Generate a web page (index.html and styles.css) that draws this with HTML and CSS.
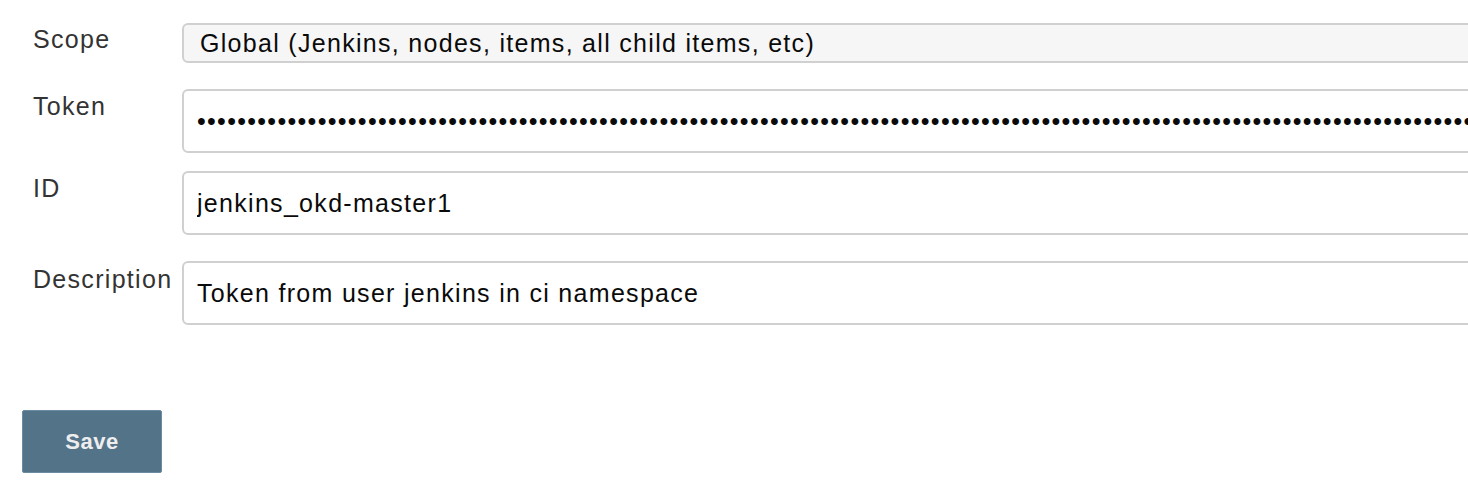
FILE: index.html
```html
<!DOCTYPE html>
<html lang="en">
<head>
<meta charset="utf-8">
<title>Credentials</title>
<link rel="stylesheet" href="styles.css">
</head>
<body>
<form class="form">
  <div class="row row--scope">
    <label class="label" for="scope">Scope</label>
    <div class="field">
      <select id="scope" class="control control--select">
        <option>Global (Jenkins, nodes, items, all child items, etc)</option>
      </select>
    </div>
  </div>
  <div class="row row--token">
    <label class="label" for="token">Token</label>
    <div class="field">
      <input id="token" class="control control--tall" type="password" value="eyJhbGciOiJSUzI1NiIsImtpZCI6IiJ9eyJpc3MiOiJrdWJlcm5ldGVzL3NlcnZpY2VhY2NvdW50Iiwia3ViZXJuZXRlcy5pbyJ9abcdefghij0123456789eyJhbGciOiJSUzI1NiIsImtpZCI6IiJ9eyJpc3MiOiJrdWJlcm5ldGVz">
    </div>
  </div>
  <div class="row row--id">
    <label class="label" for="cid">ID</label>
    <div class="field">
      <input id="cid" class="control control--tall" type="text" value="jenkins_okd-master1">
    </div>
  </div>
  <div class="row row--desc">
    <label class="label" for="desc">Description</label>
    <div class="field">
      <input id="desc" class="control control--tall" type="text" value="Token from user jenkins in ci namespace">
    </div>
  </div>
  <div class="actions">
    <button type="button" class="btn-save">Save</button>
  </div>
</form>
</body>
</html>
```

FILE: styles.css
```css
html, body {
  margin: 0;
  padding: 0;
  background: #ffffff;
  overflow: hidden;
}

body {
  font-family: "Liberation Sans", Arial, Helvetica, sans-serif;
  color: #333333;
}

.form {
  padding: 23px 0 0 22px;
  display: flex;
  flex-direction: column;
}

.row {
  display: flex;
  align-items: flex-start;
}

.row--scope { margin-bottom: 26px; }
.row--token { margin-bottom: 18px; }
.row--id { margin-bottom: 26px; }

.label {
  width: 160px;
  flex: 0 0 160px;
  box-sizing: border-box;
  padding-left: 11px;
  font-size: 25px;
  letter-spacing: 1.3px;
  line-height: 29px;
  color: #333333;
  white-space: nowrap;
}

.row--scope .label { padding-top: 2px; }
.row--token .label { padding-top: 3px; }
.row--id .label { padding-top: 3px; }
.row--desc .label { padding-top: 4px; }

.field {
  flex: 0 0 auto;
}

.control {
  display: block;
  width: 1330px;
  box-sizing: border-box;
  margin: 0;
  border: 2px solid #d0d0d0;
  border-radius: 6px;
  background: #ffffff;
  font-family: "Liberation Sans", Arial, Helvetica, sans-serif;
  font-size: 25px;
  letter-spacing: 1.3px;
  color: #0a0a0a;
  outline: none;
}

.control--select {
  -webkit-appearance: none;
  appearance: none;
  height: 40px;
  padding: 0 0 0 16px;
  background: #f6f6f6;
  color: #0a0a0a;
  line-height: 36px;
}

.control--tall {
  height: 64px;
  padding: 0 0 0 13px;
}

.actions {
  margin-top: 85px;
}

.btn-save {
  width: 140px;
  height: 63px;
  margin: 0;
  padding: 0;
  border: 1px solid #6a8ba1;
  border-radius: 2px;
  background: #537389;
  color: #eeeeee;
  font-family: "Liberation Sans", Arial, Helvetica, sans-serif;
  font-weight: bold;
  font-size: 22px;
  letter-spacing: 0.5px;
  cursor: pointer;
}
```
